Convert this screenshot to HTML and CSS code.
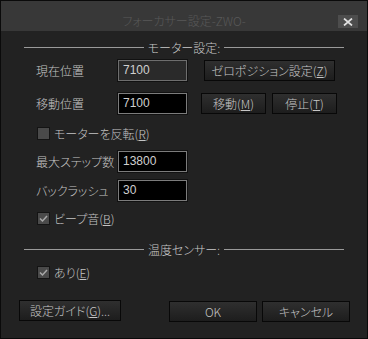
FILE: index.html
```html
<!DOCTYPE html>
<html lang="ja">
<head>
<meta charset="utf-8">
<title>フォーカサー設定-ZWO-</title>
<link rel="stylesheet" href="styles.css">
</head>
<body>
<div class="window">
  <div class="titlebar">
    <span class="spacer"></span>
    <span class="title">フォーカサー設定-ZWO-</span>
    <span class="close-wrap"><span class="close"><svg width="10" height="8" viewBox="0 0 10 8"><path d="M1 0.5 L9 7.5 M9 0.5 L1 7.5" stroke="#e2e2e2" stroke-width="1.7" fill="none"/></svg></span></span>
  </div>
  <div class="body">
    <div class="section s1"><span class="line"></span><span class="sec-text">モーター設定:</span><span class="line"></span></div>

    <div class="row r1">
      <span class="label">現在位置</span>
      <span class="field disabled">7100</span>
      <span class="btn btn-zero">ゼロポジション設定(<u>Z</u>)</span>
    </div>

    <div class="row r2">
      <span class="label">移動位置</span>
      <span class="field">7100</span>
      <span class="btn btn-move">移動(<u>M</u>)</span>
      <span class="btn btn-stop">停止(<u>T</u>)</span>
    </div>

    <div class="check c1">
      <span class="box"></span><span class="ctext">モーターを反転(<u>R</u>)</span>
    </div>

    <div class="row r3">
      <span class="label">最大ステップ数</span>
      <span class="field">13800</span>
    </div>

    <div class="row r4">
      <span class="label">バックラッシュ</span>
      <span class="field">30</span>
    </div>

    <div class="check c2">
      <span class="box"><svg width="11" height="11" viewBox="0 0 11 11"><path d="M2 5.5 L4.5 8 L9 3" stroke="#a8a8a8" stroke-width="1.5" fill="none"/></svg></span><span class="ctext">ビープ音(<u>B</u>)</span>
    </div>

    <div class="section s2"><span class="line"></span><span class="sec-text">温度センサー:</span><span class="line"></span></div>

    <div class="check c3">
      <span class="box"><svg width="11" height="11" viewBox="0 0 11 11"><path d="M2 5.5 L4.5 8 L9 3" stroke="#a8a8a8" stroke-width="1.5" fill="none"/></svg></span><span class="ctext">あり(<u>E</u>)</span>
    </div>

    <div class="footer">
      <span class="btn btn-guide">設定ガイド(<u>G</u>)...</span>
      <span class="btn btn-ok">OK</span>
      <span class="btn btn-cancel">キャンセル</span>
    </div>
  </div>
</div>
</body>
</html>
```

FILE: styles.css
```css
html, body {
  margin: 0;
  padding: 0;
  background: #000;
}

body {
  font-family: "Noto Sans CJK JP", "Noto Sans", sans-serif;
  font-size: 12px;
  font-weight: 300;
  font-feature-settings: "palt";
  color: #c4c4c4;
}

.window {
  width: 366px;
  height: 337px;
  border: 1px solid #0a0a0a;
  background: #222222;
  display: flex;
  flex-direction: column;
}

.titlebar {
  height: 30px;
  background: #383838;
  display: grid;
  grid-template-columns: 1fr auto 1fr;
  align-items: start;
}

.title {
  margin-top: 13px;
  line-height: 14px;
  color: #585858;
  white-space: nowrap;
}

.close-wrap {
  display: flex;
  justify-content: flex-end;
  padding-right: 9px;
  padding-top: 14px;
}

.close {
  width: 20px;
  height: 13px;
  background: #4d4d4d;
  display: flex;
  align-items: center;
  justify-content: center;
}

.body {
  flex: 1;
  display: flex;
  flex-direction: column;
}

.section {
  display: flex;
  align-items: center;
  height: 13px;
  margin: 0 23px 0 23px;
}

.section .line {
  flex: 1;
  height: 1px;
  background: #9a9a9a;
}

.sec-text {
  padding: 0 4px;
  line-height: 13px;
  white-space: nowrap;
  color: #cacaca;
}

.s1 { margin-top: 10px; }
.s2 { margin-top: 18px; }

.row {
  display: flex;
  align-items: center;
  height: 21px;
  padding-left: 35px;
}

.r1 { margin-top: 6px; }
.r2 { margin-top: 12px; }
.r3 { margin-top: 11px; }
.r4 { margin-top: 8px; }

.label {
  width: 82px;
  line-height: 13px;
  white-space: nowrap;
}

.field {
  box-sizing: border-box;
  width: 69px;
  height: 21px;
  border: 1px solid #7c7c7c;
  box-shadow: 0 0 0 1px #111;
  background: #000;
  font-family: "Liberation Sans Narrow", "Liberation Sans", sans-serif;
  font-weight: 400;
  font-size: 12px;
  line-height: 19px;
  padding-left: 4px;
  color: #d0d0d0;
}

.field.disabled {
  background: #2a2a2a;
  border-color: #6e6e6e;
}

.btn {
  box-sizing: border-box;
  height: 21px;
  border: 1px solid #080808;
  background: linear-gradient(#2f2f2f, #1d1d1d);
  display: flex;
  align-items: center;
  justify-content: center;
  white-space: nowrap;
  color: #c6c6c6;
  line-height: 13px;
}

.btn u {
  text-decoration: underline;
  text-underline-offset: 1px;
}

.btn-zero { width: 131px; margin-left: 17px; }
.btn-move { width: 65px; margin-left: 14px; }
.btn-stop { width: 65px; margin-left: 6px; }

.check {
  display: flex;
  align-items: center;
  height: 13px;
  padding-left: 36px;
}

.c1 { margin-top: 13px; }
.c2 { margin-top: 11px; }
.c3 { margin-top: 10px; }

.box {
  box-sizing: border-box;
  width: 13px;
  height: 13px;
  border: 1px solid #141414;
  background: #4a4a4a;
  display: flex;
  align-items: center;
  justify-content: center;
}

.ctext {
  margin-left: 4px;
  line-height: 13px;
  white-space: nowrap;
}

.footer {
  display: flex;
  align-items: flex-start;
  margin-top: 21px;
  padding-left: 18px;
}

.btn-guide { width: 102px; height: 21px; }
.btn-ok { width: 88px; height: 21px; margin-left: 48px; margin-top: 1px; }
.btn-cancel { width: 88px; height: 21px; margin-left: 5px; margin-top: 1px; }
```
